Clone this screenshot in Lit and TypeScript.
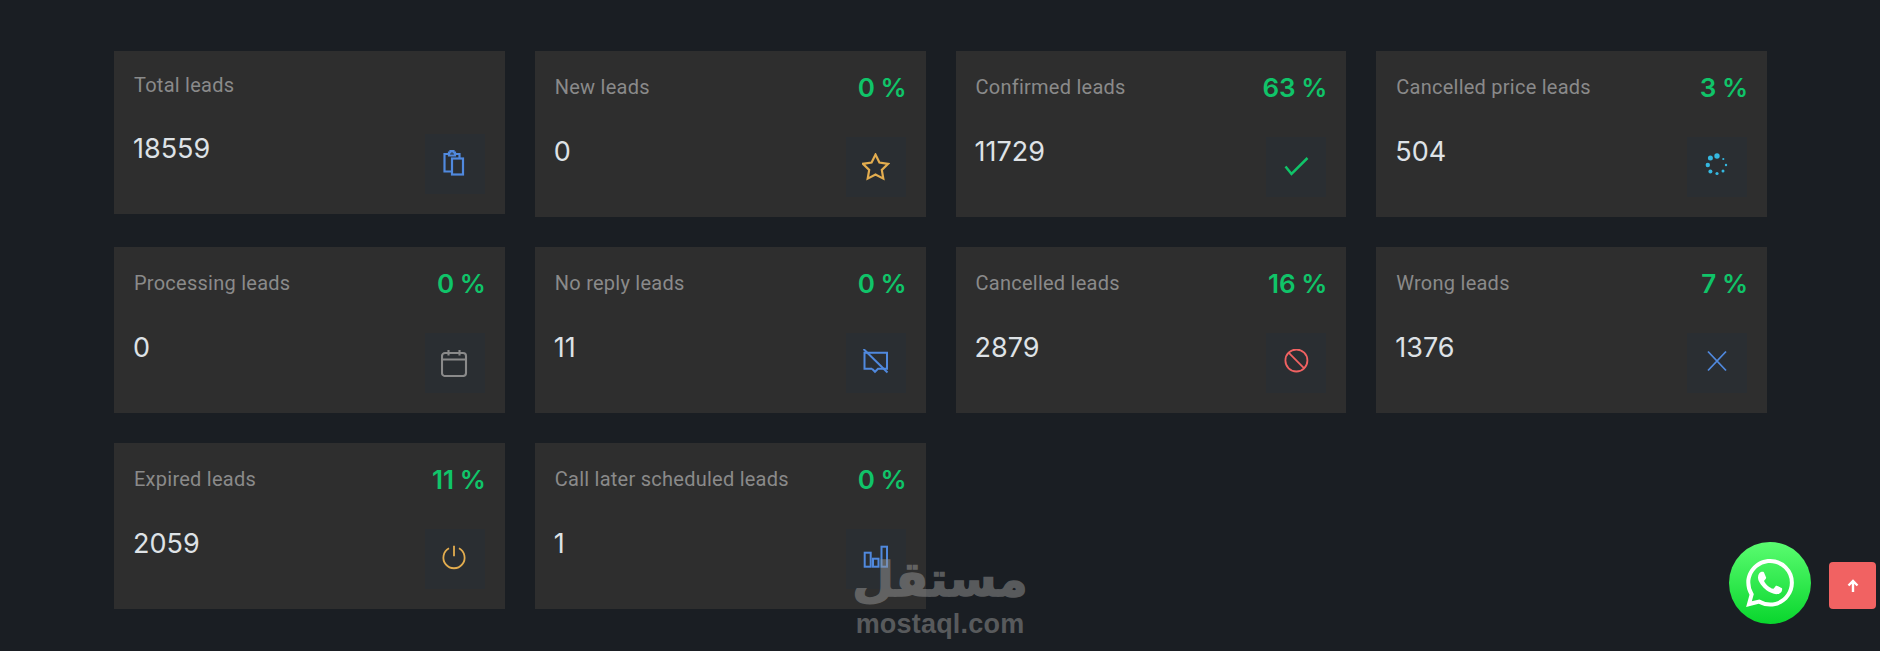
import { LitElement, css, html, svg } from 'lit';
import { customElement } from 'lit/decorators.js';

const icons = {
  clipboard: svg`<g stroke-width="2.2"><path d="M8 4H3.5v17.5H11M14 4h4.5v4.5M8 2.5h1.5V1h3v1.5H14V5.5H8z"/><rect x="11" y="8.5" width="11" height="16"/></g>`,
  star: svg`<path stroke-width="2.2" d="M13.5 1.6l3.9 8 8.7 1.2-6.3 6.1 1.5 8.7-7.8-4.1-7.8 4.1 1.5-8.7-6.3-6.1 8.7-1.2z"/>`,
  check: svg`<path stroke-width="2.5" d="M3.5 13.5l6 7.5L25.5 5" />`,
  calendar: svg`<g stroke-width="2.1"><rect x="1" y="4" width="24" height="23" rx="3"/><path d="M1 10.5h24M7.5 1v5.5M18.5 1v5.5"/></g>`,
  noReply: svg`<g stroke-width="2"><path d="M4 3.8h21v16h-6M10 19.8H2.5V3.8H4M10 19.8l3 3 3-3h3"/><path d="M1.5 0l24 23.5"/></g>`,
  ban: svg`<circle cx="14.4" cy="11.5" r="11"/><path d="M6.6 3.7l15.6 15.6"/>`,
  cross: svg`<path d="M5 2.5l18 19M23 2.5l-18 19"/>`,
  power: svg`<path d="M8 3.3a10.6 10.6 0 1 0 10 0M13 .8v10.5"/>`,
  bars: svg`<g stroke-width="2"><rect x="2.7" y="7.7" width="6" height="14"/><rect x="11" y="13.7" width="5.5" height="8"/><rect x="19.5" y="1.7" width="5.5" height="20"/></g>`,
};

const spinnerDots = [
  [14, 3, 2.7], [7.4, 5, 2.5], [4.8, 12, 2.2], [7.4, 18.5, 2],
  [14, 20.5, 1.6], [20, 18, 1.5], [23, 12, 1.2], [20.3, 6, 1.1],
];

const leads = [
  { label: 'Total leads', value: '18559', icon: 'clipboard', color: '#5089de' },
  { label: 'New leads', pct: 0, value: '0', icon: 'star', color: '#e3ad4f' },
  { label: 'Confirmed leads', pct: 63, value: '11729', icon: 'check', color: '#10c469' },
  { label: 'Cancelled price leads', pct: 3, value: '504', icon: 'spinner', color: '#35b8e0' },
  { label: 'Processing leads', pct: 0, value: '0', icon: 'calendar', color: '#8a8a8a' },
  { label: 'No reply leads', pct: 0, value: '11', icon: 'noReply', color: '#5089de' },
  { label: 'Cancelled leads', pct: 16, value: '2879', icon: 'ban', color: '#f16262' },
  { label: 'Wrong leads', pct: 7, value: '1376', icon: 'cross', color: '#5089de' },
  { label: 'Expired leads', pct: 11, value: '2059', icon: 'power', color: '#e3ad4f' },
  { label: 'Call later scheduled leads', pct: 0, value: '1', icon: 'bars', color: '#5089de' },
];

@customElement('app-root')
export class AppRoot extends LitElement {
  static styles = css`
    :host {
      display: block;
      position: relative;
      min-height: 651px;
      overflow: hidden;
      background: #1a1e23;
      font-family: 'Roboto', sans-serif;
    }

    .grid {
      display: grid;
      grid-template-columns: repeat(4, 1fr);
      align-items: start;
      gap: 30px;
      padding: 51px 113px 0 114px;
    }

    .card {
      background: #2e2e2e;
      padding: 20px;
    }

    .card_head {
      display: flex;
      justify-content: space-between;
      align-items: center;
      margin-bottom: 36px;
    }

    .card_label {
      padding-top: 2px;
      font-size: 20px;
      letter-spacing: 0.25px;
      line-height: 25px;
      color: #8a8a8a;
    }

    .card_pct {
      margin-right: -1px;
      padding-top: 3px;
      font-family: 'Inter', sans-serif;
      font-size: 26px;
      font-weight: 600;
      word-spacing: -1px;
      line-height: 27px;
      color: #10c469;
    }

    .card_body {
      display: flex;
      justify-content: space-between;
      align-items: flex-start;
    }

    .card_value {
      margin-left: -1px;
      font-family: 'Inter', sans-serif;
      font-size: 27px;
      line-height: 29px;
      color: #dee2e6;
    }

    .card_icon {
      display: flex;
      align-items: center;
      justify-content: center;
      width: 60px;
      height: 60px;
      background: #2a2e32;
    }

    .card_icon svg {
      width: 28px;
      height: 28px;
      fill: none;
      stroke-width: 1.8;
    }

    .watermark {
      position: absolute;
      left: 840px;
      top: 548px;
      width: 200px;
      text-align: center;
      color: #969696;
      opacity: 0.5;
      pointer-events: none;
    }

    .watermark_ar {
      font-family: 'DejaVu Sans', sans-serif;
      font-weight: 700;
      font-size: 48px;
      line-height: 63px;
      -webkit-text-stroke: 1.5px #969696;
    }

    .watermark_en {
      font-family: 'Liberation Sans', sans-serif;
      font-weight: 700;
      font-size: 27px;
      letter-spacing: 0.2px;
      line-height: 26px;
    }

    .whatsapp {
      position: absolute;
      left: 1729px;
      top: 542px;
      display: flex;
      align-items: center;
      justify-content: center;
      width: 82px;
      height: 82px;
      border-radius: 50%;
      background: linear-gradient(#5afc70, #09d62d);
    }

    .whatsapp svg {
      width: 48px;
      height: 48px;
      fill: #fff;
    }

    .top_btn {
      position: absolute;
      left: 1829px;
      top: 562px;
      display: flex;
      align-items: center;
      justify-content: center;
      width: 47px;
      height: 47px;
      border-radius: 4px;
      background: #f16262;
    }

    .top_btn svg {
      width: 14px;
      height: 14px;
      fill: none;
      stroke: #fff;
      stroke-width: 2.4;
    }
  `;

  renderIcon(name: string, color: string) {
    if (name === 'spinner') {
      return html`<svg viewBox="0 0 28 28" style="fill:${color};stroke:none">
        ${spinnerDots.map(([x, y, r]) => svg`<circle cx=${x} cy=${y} r=${r}/>`)}
      </svg>`;
    }
    return html`<svg viewBox="0 0 28 28" style="stroke:${color}">${(icons as any)[name]}</svg>`;
  }

  render() {
    return html`
      <div class="grid">
        ${leads.map(
          (lead) => html`
            <div class="card">
              <div class="card_head">
                <span class="card_label">${lead.label}</span>
                ${lead.pct !== undefined ? html`<span class="card_pct">${lead.pct} %</span>` : ''}
              </div>
              <div class="card_body">
                <span class="card_value">${lead.value}</span>
                <div class="card_icon">${this.renderIcon(lead.icon, lead.color)}</div>
              </div>
            </div>
          `,
        )}
      </div>

      <div class="watermark">
        <div class="watermark_ar" lang="ar" dir="rtl">مستقل</div>
        <div class="watermark_en">mostaql.com</div>
      </div>

      <div class="whatsapp">
        <svg viewBox="0 0 24 24"><path d="M17.472 14.382c-.297-.149-1.758-.867-2.03-.967-.273-.099-.471-.148-.67.15-.197.297-.767.966-.94 1.164-.173.199-.347.223-.644.075-.297-.15-1.255-.463-2.39-1.475-.883-.788-1.48-1.761-1.653-2.059-.173-.297-.018-.458.13-.606.134-.133.298-.347.446-.52.149-.174.198-.298.298-.497.099-.198.05-.371-.025-.52-.075-.149-.669-1.612-.916-2.207-.242-.579-.487-.5-.669-.51-.173-.008-.371-.01-.57-.01-.198 0-.52.074-.792.372-.272.297-1.04 1.016-1.04 2.479 0 1.462 1.065 2.875 1.213 3.074.149.198 2.096 3.2 5.077 4.487.709.306 1.262.489 1.694.625.712.227 1.36.195 1.871.118.571-.085 1.758-.719 2.006-1.413.248-.694.248-1.289.173-1.413-.074-.124-.272-.198-.57-.347m-5.421 7.403h-.004a9.87 9.87 0 01-5.031-1.378l-.361-.214-3.741.982.998-3.648-.235-.374a9.86 9.86 0 01-1.51-5.26c.001-5.45 4.436-9.884 9.888-9.884 2.64 0 5.122 1.03 6.988 2.898a9.825 9.825 0 012.893 6.994c-.003 5.45-4.437 9.884-9.885 9.884m8.413-18.297A11.815 11.815 0 0012.05 0C5.495 0 .16 5.335.157 11.892c0 2.096.547 4.142 1.588 5.945L.057 24l6.305-1.654a11.882 11.882 0 005.683 1.448h.005c6.554 0 11.89-5.335 11.893-11.893a11.821 11.821 0 00-3.48-8.413z"/></svg>
      </div>

      <div class="top_btn">
        <svg viewBox="0 0 14 14"><path d="M7 13V2M2.5 6.5L7 2l4.5 4.5"/></svg>
      </div>
    `;
  }
}
